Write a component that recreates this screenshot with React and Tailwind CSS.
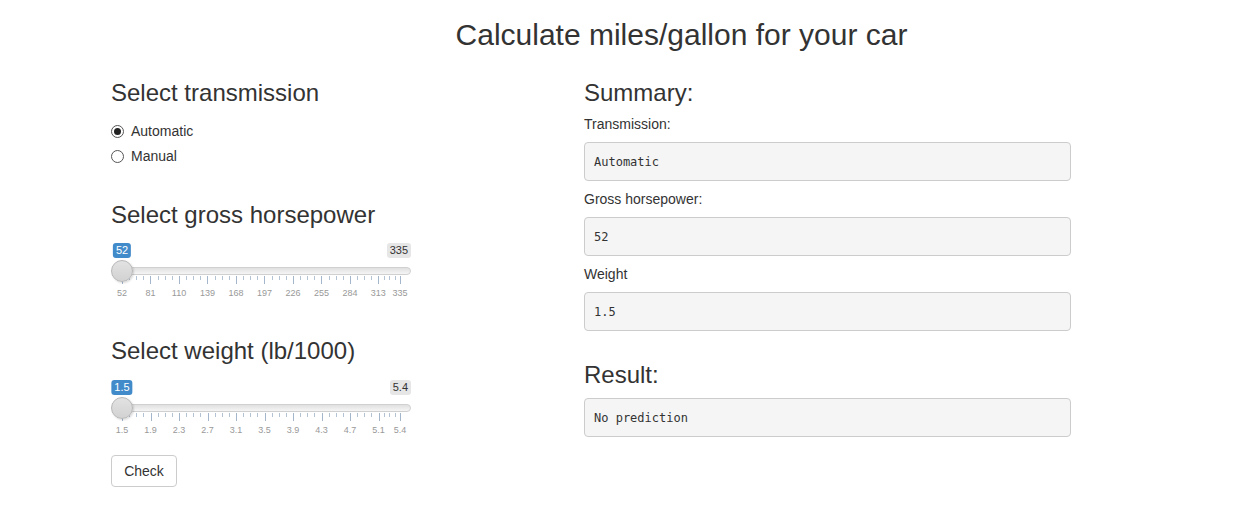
import React, { useState } from "react";

const Radio = ({ checked, label, onClick }) => (
  <div className="flex items-center h-5 cursor-pointer" onClick={onClick}>
    <span className="w-[13px] h-[13px] rounded-full border border-[#555] bg-white flex items-center justify-center">
      {checked && <span className="w-[7px] h-[7px] rounded-full bg-[#222]" />}
    </span>
    <span className="ml-[7px] text-[14px] text-[#333]">{label}</span>
  </div>
);

const Slider = ({ min, max, value, labels }) => {
  const width = 300;
  const pad = 11;
  const span = width - pad * 2;
  const pos = (v) => pad + ((v - min) / (max - min)) * span;
  const nums = labels.map(Number);
  const minors = [];
  for (let i = 0; i < nums.length - 1; i++) {
    const a = pos(nums[i]);
    const b = pos(nums[i + 1]);
    for (let k = 1; k < 4; k++) minors.push(a + ((b - a) * k) / 4);
  }
  const hx = pos(value);
  return (
    <div className="relative w-[300px] h-[58px]">
      <span
        className="absolute top-0 px-[3px] h-[15px] leading-[15px] rounded-[3px] bg-[#428bca] text-white text-[11px]"
        style={{ left: hx, transform: "translateX(-50%)" }}
      >
        {value}
      </span>
      <span className="absolute top-0 right-0 px-[3px] h-[15px] leading-[15px] rounded-[3px] bg-[#e6e6e6] text-[#333] text-[11px]">
        {max}
      </span>
      <div className="absolute left-[2px] right-0 top-[24px] h-[8px] rounded-[4px] border border-[#d0d0d0] bg-gradient-to-b from-[#e0e0e0] to-[#f5f5f5]" />
      {minors.map((x, i) => (
        <span
          key={"m" + i}
          className="absolute top-[33px] w-px h-[4px] bg-[#b4c3d4]"
          style={{ left: x }}
        />
      ))}
      {labels.map((l, i) => (
        <span
          key={"t" + i}
          className="absolute top-[33px] w-px h-[8px] bg-[#a3b6cb]"
          style={{ left: pos(nums[i]) }}
        />
      ))}
      {labels.map((l, i) => (
        <span
          key={"l" + i}
          className="absolute top-[44px] text-[9px] leading-[12px] text-[#999]"
          style={{ left: pos(nums[i]), transform: "translateX(-50%)" }}
        >
          {l}
        </span>
      ))}
      <span
        className="absolute top-[17px] w-[22px] h-[22px] rounded-full border border-[#b8b8b8] bg-gradient-to-b from-[#e2e2e2] to-[#d2d2d2] shadow-[1px_1px_2px_rgba(0,0,0,0.15)]"
        style={{ left: hx - 11 }}
      />
    </div>
  );
};

const Box = ({ children, className = "" }) => (
  <div
    className={
      "h-[39px] px-[9px] flex items-center rounded-[4px] border border-[#ccc] bg-[#f5f5f5] text-[#333] text-[12px] " +
      className
    }
    style={{ fontFamily: '"DejaVu Sans Mono", "Liberation Mono", monospace' }}
  >
    {children}
  </div>
);

export default function App() {
  const [trans, setTrans] = useState("Automatic");

  const hpLabels = ["52", "81", "110", "139", "168", "197", "226", "255", "284", "313", "335"];
  const wtLabels = ["1.5", "1.9", "2.3", "2.7", "3.1", "3.5", "3.9", "4.3", "4.7", "5.1", "5.4"];

  return (
    <div
      className="min-h-screen bg-white text-[#333] w-[1237px] h-[521px]"
      style={{ fontFamily: '"Liberation Sans", Arial, sans-serif' }}
    >
      <h2 className="pt-[18px] pl-[126px] text-center text-[30px] leading-[33px]">
        Calculate miles/gallon for your car
      </h2>

      <div className="flex">
        <div className="ml-[111px] w-[473px] flex flex-col">
          <h3 className="mt-[29px] text-[24px] leading-[26px]">Select transmission</h3>
          <div className="mt-[15px]">
            <Radio checked={trans === "Automatic"} label="Automatic" onClick={() => setTrans("Automatic")} />
          </div>
          <div className="mt-[5px]">
            <Radio checked={trans === "Manual"} label="Manual" onClick={() => setTrans("Manual")} />
          </div>

          <h3 className="mt-[36px] text-[24px] leading-[26px]">Select gross horsepower</h3>
          <div className="mt-[15px]">
            <Slider min={52} max={335} value={52} labels={hpLabels} />
          </div>

          <h3 className="mt-[37px] text-[24px] leading-[26px]">Select weight (lb/1000)</h3>
          <div className="mt-[16px]">
            <Slider min={1.5} max={5.4} value={1.5} labels={wtLabels} />
          </div>

          <div className="mt-[17px]">
            <button className="h-[32px] w-[66px] rounded-[4px] border border-[#ccc] bg-white text-[14px] text-[#333]">
              Check
            </button>
          </div>
        </div>

        <div className="w-[487px] flex flex-col">
          <h3 className="mt-[29px] text-[24px] leading-[26px]">Summary:</h3>
          <div className="mt-[8px] text-[14px] leading-[20px]">Transmission:</div>
          <Box className="mt-[8px]">{trans}</Box>
          <div className="mt-[8px] text-[14px] leading-[20px]">Gross horsepower:</div>
          <Box className="mt-[8px]">52</Box>
          <div className="mt-[8px] text-[14px] leading-[20px]">Weight</div>
          <Box className="mt-[8px]">1.5</Box>
          <h3 className="mt-[31px] text-[24px] leading-[26px]">Result:</h3>
          <Box className="mt-[10px]">No prediction</Box>
        </div>
      </div>
    </div>
  );
}
